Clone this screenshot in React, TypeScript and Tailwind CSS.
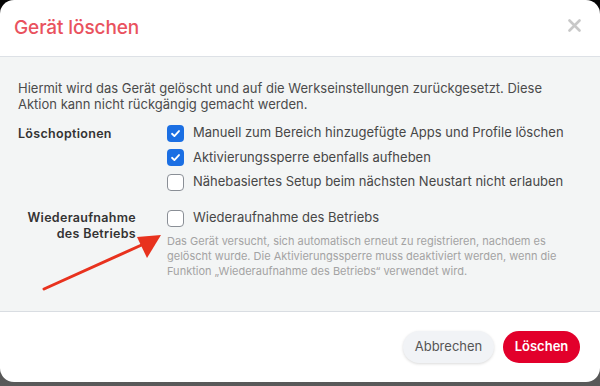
import React from "react";

function Box({ checked }: { checked?: boolean }) {
  if (checked) {
    return (
      <span className="flex h-[17px] w-[17px] shrink-0 items-center justify-center rounded-[4px] bg-[#1b6fe3]">
        <svg width="11" height="11" viewBox="0 0 12 12" fill="none">
          <path d="M2.2 6.3 4.8 8.8 9.8 3.3" stroke="#fff" strokeWidth="2" strokeLinecap="round" strokeLinejoin="round" />
        </svg>
      </span>
    );
  }
  return <span className="h-[17px] w-[17px] shrink-0 rounded-[4px] border border-[#8a8f96] bg-white" />;
}

const options = [
  { label: "Manuell zum Bereich hinzugefügte Apps und Profile löschen", checked: true },
  { label: "Aktivierungssperre ebenfalls aufheben", checked: true },
  { label: "Nähebasiertes Setup beim nächsten Neustart nicht erlauben", checked: false },
];

export default function App() {
  return (
    <div className="h-[386px] w-[600px] bg-gradient-to-b from-[#050505] to-[#5a5a5a] font-['Inter',sans-serif]">
      <div className="relative flex h-[382px] w-full flex-col overflow-hidden rounded-[14px] bg-white">
        <div className="flex h-[57px] shrink-0 items-center justify-between border-b border-[#dde1e6] pl-[14px] pr-[19px]">
          <h2 className="text-[19px] font-medium tracking-[-0.1px] text-[#e9525e]">Gerät löschen</h2>
          <svg className="-mt-[6px]" width="13" height="13" viewBox="0 0 13 13">
            <path d="M1.5 1.5 11.5 11.5M11.5 1.5 1.5 11.5" stroke="#c8c8c8" strokeWidth="2.6" strokeLinecap="round" />
          </svg>
        </div>

        <div className="flex-1 bg-[#f3f5f5] px-[18px] pt-[23px]">
          <p className="text-[13px] leading-[16px] text-[#4b4b4b]">
            Hiermit wird das Gerät gelöscht und auf die Werkseinstellungen zurückgesetzt. Diese
            <br />
            Aktion kann nicht rückgängig gemacht werden.
          </p>

          <div className="mt-[12.5px] flex">
            <div className="w-[149px] shrink-0 text-[12.5px] font-semibold leading-[17px] tracking-[0.3px] text-[#333]">
              Löschoptionen
            </div>
            <div className="flex flex-col gap-[7.5px]">
              {options.map((o) => (
                <label key={o.label} className="flex h-[17px] items-center gap-[9px] text-[13px] text-[#474747]">
                  <Box checked={o.checked} />
                  <span>{o.label}</span>
                </label>
              ))}
            </div>
          </div>

          <div className="mt-[19px] flex">
            <div className="w-[149px] shrink-0 pr-[31px] text-right text-[12.5px] font-semibold leading-[16px] tracking-[0.3px] text-[#333]">
              Wiederaufnahme
              <br />
              des Betriebs
            </div>
            <div>
              <label className="flex h-[17px] items-center gap-[9px] text-[13px] text-[#474747]">
                <Box />
                <span>Wiederaufnahme des Betriebs</span>
              </label>
              <p className="mt-[7px] text-[11px] leading-[15px] text-[#a3a3a3]">
                Das Gerät versucht, sich automatisch erneut zu registrieren, nachdem es
                <br />
                gelöscht wurde. Die Aktivierungssperre muss deaktiviert werden, wenn die
                <br />
                Funktion „Wiederaufnahme des Betriebs“ verwendet wird.
              </p>
            </div>
          </div>
        </div>

        <div className="flex h-[71px] shrink-0 items-center justify-end gap-[9px] border-t border-[#d9dde2] pr-[20px]">
          <button className="h-[32px] w-[91px] rounded-full bg-[#f1f3f6] text-[13px] text-[#555] shadow-[0_1px_3px_rgba(0,0,0,0.15)]">
            Abbrechen
          </button>
          <button className="h-[32px] w-[77px] rounded-full bg-[#e2002b] text-[13px] font-semibold text-white">
            Löschen
          </button>
        </div>

        <svg className="absolute left-0 top-0" width="600" height="382" viewBox="0 0 600 382">
          <line x1="44" y1="289" x2="146" y2="243" stroke="#e8321e" strokeWidth="3" strokeLinecap="round" />
          <path d="M161 235 137 237 147 258Z" fill="#e8321e" />
        </svg>
      </div>
    </div>
  );
}
